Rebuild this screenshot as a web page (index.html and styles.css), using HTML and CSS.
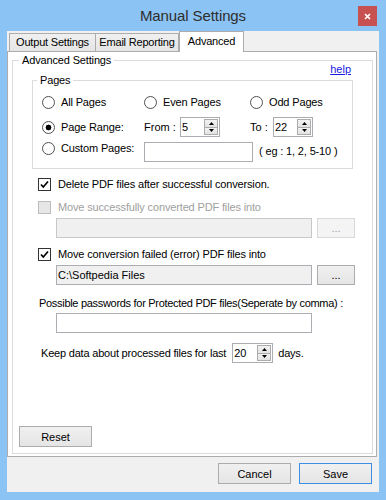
FILE: index.html
```html
<!DOCTYPE html>
<html lang="en">
<head>
    <meta charset="UTF-8">
    <title>Manual Settings</title>
    <link rel="stylesheet" href="styles.css">
</head>
<body>
    <div class="window">
        <div class="titlebar">
            <span></span>
            <span class="title">Manual Settings</span>
            <span class="close-btn">
                <svg width="7" height="7" viewBox="0 0 7 7"><path d="M1 1L6 6M6 1L1 6" stroke="#fff" stroke-width="1.7"/></svg>
            </span>
        </div>

        <div class="client">
            <!-- Tabs -->
            <div class="tabs">
                <div class="tab tab-output">Output Settings</div>
                <div class="tab tab-email">Email Reporting</div>
                <div class="tab tab-advanced active">Advanced</div>
            </div>

            <div class="panel">
                <fieldset class="group main-group">
                    <legend>Advanced Settings</legend>

                    <div class="help-row"><a href="#" class="help">help</a></div>

                    <!-- Pages -->
                    <fieldset class="group pages">
                        <legend>Pages</legend>
                        <div class="pages-grid">
                            <label class="radio"><span class="rb"></span>All Pages</label>
                            <label class="radio"><span class="rb"></span>Even Pages</label>
                            <label class="radio"><span class="rb"></span>Odd Pages</label>

                            <label class="radio"><span class="rb checked"></span>Page Range:</label>
                            <div class="range">
                                <span class="range-label from">From :</span>
                                <div class="spin">
                                    <span class="spin-val">5</span>
                                    <span class="spin-btns">
                                        <span><svg width="5" height="3" viewBox="0 0 5 3"><path d="M0 3L2.5 0L5 3Z"/></svg></span>
                                        <span><svg width="5" height="3" viewBox="0 0 5 3"><path d="M0 0L2.5 3L5 0Z"/></svg></span>
                                    </span>
                                </div>
                            </div>
                            <div class="range">
                                <span class="range-label to">To :</span>
                                <div class="spin">
                                    <span class="spin-val">22</span>
                                    <span class="spin-btns">
                                        <span><svg width="5" height="3" viewBox="0 0 5 3"><path d="M0 3L2.5 0L5 3Z"/></svg></span>
                                        <span><svg width="5" height="3" viewBox="0 0 5 3"><path d="M0 0L2.5 3L5 0Z"/></svg></span>
                                    </span>
                                </div>
                            </div>

                            <label class="radio top"><span class="rb"></span>Custom Pages:</label>
                            <div class="custom">
                                <div class="textbox custom-box"></div>
                                <span class="hint">( eg : 1, 2, 5-10 )</span>
                            </div>
                        </div>
                    </fieldset>

                    <label class="check-row first"><span class="cb checked">
                        <svg width="11" height="11" viewBox="0 0 11 11"><path d="M2 5.5L4.3 8L9 2.5" fill="none" stroke="#000" stroke-width="1.7"/></svg>
                    </span>Delete PDF files after successful conversion.</label>

                    <label class="check-row disabled"><span class="cb"></span>Move successfully converted PDF files into</label>
                    <div class="path-row">
                        <div class="textbox path-box disabled"></div>
                        <button class="btn browse" disabled>...</button>
                    </div>

                    <label class="check-row third"><span class="cb checked">
                        <svg width="11" height="11" viewBox="0 0 11 11"><path d="M2 5.5L4.3 8L9 2.5" fill="none" stroke="#000" stroke-width="1.7"/></svg>
                    </span>Move conversion failed (error) PDF files into</label>
                    <div class="path-row">
                        <div class="textbox path-box readonly">C:\Softpedia Files</div>
                        <button class="btn browse">...</button>
                    </div>

                    <div class="pw-label">Possible passwords for Protected PDF files(Seperate by comma) :</div>
                    <div class="path-row">
                        <div class="textbox path-box"></div>
                    </div>

                    <div class="keep-row">
                        <span>Keep data about processed files for last</span>
                        <div class="spin keep-spin">
                            <span class="spin-val">20</span>
                            <span class="spin-btns">
                                <span><svg width="5" height="3" viewBox="0 0 5 3"><path d="M0 3L2.5 0L5 3Z"/></svg></span>
                                <span><svg width="5" height="3" viewBox="0 0 5 3"><path d="M0 0L2.5 3L5 0Z"/></svg></span>
                            </span>
                        </div>
                        <span>days.</span>
                    </div>

                    <button class="btn reset">Reset</button>
                </fieldset>
            </div>

            <div class="dialog-buttons">
                <button class="btn">Cancel</button>
                <button class="btn default">Save</button>
            </div>
        </div>
    </div>
</body>
</html>
```

FILE: styles.css
```css
* {
    box-sizing: border-box;
}

body {
    margin: 0;
    font-family: "Liberation Sans", Arial, sans-serif;
    font-size: 11px;
    color: #000;
    background: #8bc3f4;
}

.window {
    width: 386px;
    height: 500px;
    background: #8bc3f4;
    display: flex;
    flex-direction: column;
}

/* Title bar */
.titlebar {
    height: 31px;
    flex: none;
    display: grid;
    grid-template-columns: 1fr auto 1fr;
}

.title {
    font-size: 15px;
    line-height: 32px;
    color: #2e2e2e;
    letter-spacing: -0.1px;
}

.close-btn {
    justify-self: end;
    width: 19px;
    height: 20px;
    margin: 6px 9px 0 0;
    background: #c75050;
    display: flex;
    align-items: center;
    justify-content: center;
}

/* Client area */
.client {
    flex: 1;
    margin: 0 7px 8px 7px;
    background: #f0f0f0;
    display: flex;
    flex-direction: column;
}

.tabs {
    height: 20px;
    display: flex;
    align-items: flex-end;
    padding-left: 2px;
}

.tab {
    height: 18px;
    border: 1px solid #acacac;
    border-bottom: none;
    background: linear-gradient(#f0f0f0, #e5e5e5);
    text-align: center;
    line-height: 17px;
    letter-spacing: -0.2px;
}

.tab-output { width: 87px; }
.tab-email { width: 84px; margin-left: -1px; }

.tab.active {
    width: 65px;
    height: 21px;
    margin-bottom: -1px;
    background: #fff;
    line-height: 19px;
    position: relative;
    z-index: 1;
}

.panel {
    height: 406px;
    margin-right: 2px;
    background: #fff;
    border: 1px solid #acacac;
    display: flex;
    flex-direction: column;
}

/* Group boxes */
.group {
    border: 1px solid #dcdcdc;
    margin: 0;
    padding: 0;
    min-width: 0;
}

.group legend {
    padding: 0 3px;
    line-height: 13px;
    letter-spacing: -0.15px;
}

.main-group {
    flex: 1;
    margin: 2px 3px 2px 4px;
    padding-bottom: 5px;
    display: flex;
    flex-direction: column;
}

.main-group > legend {
    margin-left: 6px;
}

.help-row {
    margin-top: -4px;
    height: 13px;
    line-height: 13px;
    text-align: right;
    padding-right: 21px;
}

.help {
    color: #1a1ae0;
    text-decoration: underline;
}

.pages {
    margin: -2px 0 0 19px;
    width: 321px;
    padding-bottom: 6px;
}

.pages > legend {
    margin-left: 4px;
}

.pages-grid {
    margin-top: 5px;
    padding-left: 9px;
    display: grid;
    grid-template-columns: 102px 106px 1fr;
    grid-auto-rows: 20px;
    row-gap: 5px;
    align-items: center;
}

.radio {
    display: flex;
    align-items: center;
    gap: 6px;
    line-height: 13px;
    letter-spacing: -0.15px;
}

.radio.top {
    align-self: start;
}

.rb {
    width: 13px;
    height: 13px;
    border: 1px solid #505050;
    border-radius: 50%;
    background: #fff;
    flex: none;
}

.rb.checked {
    background: radial-gradient(circle, #000 0 2.6px, #fff 3.2px);
}

.range {
    display: flex;
    align-items: center;
}

.range-label.from { width: 36px; }
.range-label.to { width: 23px; }

.custom {
    grid-column: 2 / 4;
    align-self: start;
    display: flex;
    gap: 6px;
}

.custom-box {
    width: 109px;
}

.hint {
    margin-top: 3px;
    letter-spacing: -0.15px;
}

/* Inputs */
.textbox {
    height: 20px;
    border: 1px solid #abadb3;
    background: #fff;
    padding-left: 1px;
    line-height: 18px;
}

.textbox.readonly {
    background: #f0f0f0;
}

.textbox.disabled {
    background: #f0f0f0;
    border-color: #c8c8c8;
}

.spin {
    width: 40px;
    height: 20px;
    border: 1px solid #abadb3;
    background: #fff;
    display: flex;
}

.spin-val {
    flex: 1;
    padding-left: 1px;
    line-height: 18px;
}

.spin-btns {
    width: 14px;
    margin: 1px;
    display: flex;
    flex-direction: column;
}

.spin-btns span {
    flex: 1;
    border: 1px solid #acacac;
    background: linear-gradient(#f2f2f2, #e3e3e3);
    display: flex;
    align-items: center;
    justify-content: center;
}

.spin-btns span + span {
    margin-top: -1px;
}

.spin-btns svg {
    fill: #000;
}

/* Checkboxes */
.check-row {
    height: 16px;
    padding-left: 25px;
    display: flex;
    align-items: center;
    gap: 7px;
    letter-spacing: -0.15px;
}

.check-row.first { margin-top: 7px; }
.check-row.disabled { margin-top: 7px; color: #a0a0a0; }
.check-row.third { margin-top: 8px; }

.cb {
    width: 13px;
    height: 13px;
    border: 1px solid #333;
    background: #fff;
    flex: none;
    display: flex;
    align-items: center;
    justify-content: center;
}

.check-row.disabled .cb {
    border-color: #bcbcbc;
    background: #e6e6e6;
}

.path-row {
    margin-top: 3px;
    padding-left: 43px;
    display: flex;
    gap: 5px;
}

.path-box {
    width: 256px;
}

.pw-label {
    margin-top: 12px;
    padding-left: 26px;
    line-height: 13px;
    letter-spacing: -0.3px;
}

.keep-row {
    margin-top: 10px;
    height: 20px;
    padding-left: 28px;
    display: flex;
    align-items: center;
    gap: 5px;
    letter-spacing: -0.2px;
}

.keep-spin {
    width: 41px;
    margin-left: 1px;
    letter-spacing: 0;
}

/* Buttons */
.btn {
    height: 21px;
    border: 1px solid #acacac;
    background: linear-gradient(#f0f0f0, #e5e5e5);
    font-family: inherit;
    font-size: 11px;
    color: #000;
    padding: 0;
}

.btn.browse {
    width: 38px;
    height: 20px;
}

.btn:disabled {
    border-color: #d9d9d9;
    background: #f4f4f4;
    color: #a0a0a0;
}

.btn.reset {
    margin-top: 63px;
    margin-left: 6px;
    width: 73px;
}

.dialog-buttons {
    margin-top: 6px;
    padding-right: 7px;
    display: flex;
    justify-content: flex-end;
    gap: 8px;
}

.dialog-buttons .btn {
    width: 73px;
}

.btn.default {
    border-color: #3c8fe3;
}
```
